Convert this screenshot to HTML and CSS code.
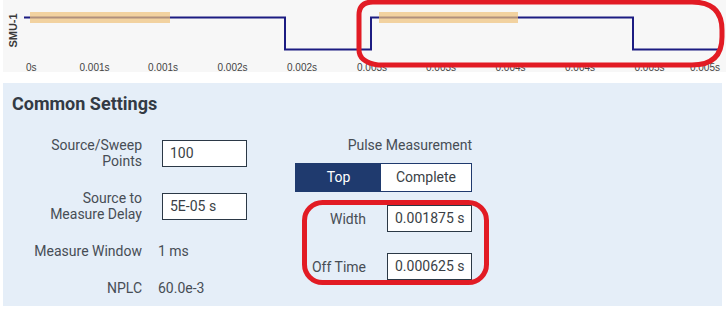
FILE: index.html
```html
<!DOCTYPE html>
<html>
<head>
<meta charset="utf-8">
<link rel="stylesheet" href="styles.css">
</head>
<body>
<div class="page">
  <div class="chart">
    <svg class="chart-svg" width="723" height="72" viewBox="3 0 723 72">
      <text class="axis-title" transform="translate(17,30.5) rotate(-90)" text-anchor="middle">SMU-1</text>
      <polyline class="signal" points="24,17.5 285,17.5 285,49.5 371,49.5 371,17.5 633,17.5 633,49.5 720,49.5"/>
      <rect class="window" x="30" y="12" width="140" height="11"/>
      <rect class="window" x="379" y="12" width="139" height="11"/>
      <g class="ticks">
        <text x="26" y="71">0s</text>
        <text x="94.5" y="71" text-anchor="middle">0.001s</text>
        <text x="163" y="71" text-anchor="middle">0.001s</text>
        <text x="232.5" y="71" text-anchor="middle">0.002s</text>
        <text x="302" y="71" text-anchor="middle">0.002s</text>
        <text x="372" y="71" text-anchor="middle">0.003s</text>
        <text x="441" y="71" text-anchor="middle">0.003s</text>
        <text x="510.5" y="71" text-anchor="middle">0.004s</text>
        <text x="580" y="71" text-anchor="middle">0.004s</text>
        <text x="649.5" y="71" text-anchor="middle">0.005s</text>
        <text x="720" y="71" text-anchor="end">0.005s</text>
      </g>
    </svg>
  </div>

  <section class="panel">
    <h2 class="title">Common Settings</h2>
    <div class="columns">
      <div class="settings">
        <div class="label">Source/Sweep<br>Points</div>
        <div class="value"><div class="field">100</div></div>
        <div class="label">Source to<br>Measure Delay</div>
        <div class="value"><div class="field">5E-05 s</div></div>
        <div class="label">Measure Window</div>
        <div class="value plain">1 ms</div>
        <div class="label">NPLC</div>
        <div class="value plain">60.0e-3</div>
      </div>
      <div class="pulse">
        <div class="pulse-title">Pulse Measurement</div>
        <div class="toggle">
          <div class="seg seg-on">Top</div>
          <div class="seg">Complete</div>
        </div>
        <div class="pulse-row">
          <div class="label">Width</div>
          <div class="field">0.001875 s</div>
        </div>
        <div class="pulse-row">
          <div class="label">Off Time</div>
          <div class="field">0.000625 s</div>
        </div>
      </div>
    </div>
  </section>

  <svg class="marks" width="726" height="309" viewBox="0 0 726 309">
    <path d="M 373 2 H 692 Q 722 2 722 30 V 37 Q 722 65 692 65 H 378 Q 359 62 359 50 V 15 Q 359 2 373 2 Z"/>
    <rect x="304.5" y="202.5" width="182" height="80" rx="18" ry="18"/>
  </svg>
</div>
</body>
</html>
```

FILE: styles.css
```css
* { box-sizing: border-box; }

html, body {
  margin: 0;
  padding: 0;
  background: #ffffff;
}

body {
  font-family: Roboto, "Noto Sans", "Liberation Sans", sans-serif;
  width: 726px;
  height: 309px;
  overflow: hidden;
}

.page {
  position: relative;
  width: 726px;
  height: 309px;
}

.chart {
  margin-left: 3px;
  height: 72px;
  background: #f7f7f7;
}

.chart-svg {
  display: block;
}

.axis-title {
  font-family: "Liberation Sans", Arial, sans-serif;
  font-weight: bold;
  font-size: 11px;
  fill: #3a3a3a;
}

.signal {
  fill: none;
  stroke: #1c1c82;
  stroke-width: 2;
}

.window {
  fill: #f0c27a;
  opacity: 0.7;
}

.ticks text {
  font-family: "Liberation Sans", Arial, sans-serif;
  font-size: 10px;
  fill: #444444;
}

.panel {
  margin: 11px 4px 0 3px;
  height: 223px;
  padding: 10px 0 0 9px;
  background: #e5eef8;
}

.title {
  margin: 0;
  font-size: 18px;
  line-height: 22px;
  font-weight: 700;
  color: #333a44;
}

.columns {
  display: flex;
  margin-top: 22px;
}

.settings {
  display: grid;
  grid-template-columns: 130px 89px;
  column-gap: 16px;
  row-gap: 21px;
  align-items: center;
}

.label {
  font-size: 14px;
  line-height: 16px;
  color: #474d55;
  text-align: right;
}

.value {
  font-size: 14px;
  line-height: 16px;
  color: #474d55;
}

.value .field {
  margin-left: 4px;
}

.field {
  width: 85px;
  height: 27px;
  border: 1px solid #2b3846;
  background: #ffffff;
  padding-left: 7px;
  font-size: 14px;
  line-height: 25px;
  color: #3a3f46;
}

.pulse {
  margin-left: 48px;
  width: 177px;
  display: flex;
  flex-direction: column;
  align-items: flex-end;
}

.pulse-title {
  font-size: 14px;
  line-height: 16px;
  color: #474d55;
}

.toggle {
  margin-top: 10px;
  display: flex;
  width: 177px;
  height: 29px;
  border: 1px solid #1f3a6e;
  background: #ffffff;
}

.seg {
  flex: 1 1 91px;
  font-size: 14px;
  line-height: 27px;
  text-align: center;
  color: #3a3f46;
}

.seg-on {
  flex: 0 0 85px;
  background: #1f3a6e;
  color: #ffffff;
}

.pulse-row {
  display: flex;
  align-items: center;
  justify-content: flex-end;
  gap: 21px;
  margin-top: 13px;
}

.pulse-row + .pulse-row {
  margin-top: 21px;
}

.marks {
  position: absolute;
  left: 0;
  top: 0;
  pointer-events: none;
}

.marks path,
.marks rect {
  fill: none;
  stroke: #e21b24;
  stroke-width: 5;
}
```
